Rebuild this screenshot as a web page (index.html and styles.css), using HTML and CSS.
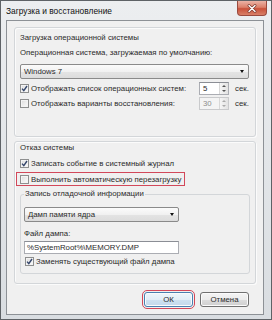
FILE: index.html
```html
<!DOCTYPE html>
<html lang="ru">
<head>
<meta charset="utf-8">
<link rel="stylesheet" href="styles.css">
</head>
<body>
<div class="window">
  <div class="titlebar">
    <span class="title">Загрузка и восстановление</span>
    <span class="close"><svg width="12" height="9" viewBox="0 0 12 9"><path d="M3 1.5 L9 7.5 M9 1.5 L3 7.5" stroke="#7a3a30" stroke-width="2.8" stroke-linecap="round"/><path d="M3 1.5 L9 7.5 M9 1.5 L3 7.5" stroke="#fff" stroke-width="1.4" stroke-linecap="round"/></svg></span>
  </div>
  <div class="client">
    <div class="group g1">
      <div class="glabel first">Загрузка операционной системы</div>
      <div class="text">Операционная система, загружаемая по умолчанию:</div>
      <div class="combo wide"><span class="ctext">Windows 7</span><i class="arrow"></i></div>
      <div class="row r1">
        <span class="cb"><svg width="7" height="7" viewBox="0 0 7 7"><path d="M1 3.6 L2.8 5.6 L6 1" fill="none" stroke="#34466b" stroke-width="1.4"/></svg></span>
        <span class="cbtext">Отображать список операционных систем:</span>
        <span class="spin"><span class="val">5</span><span class="arrows"><b class="up"></b><b class="down"></b></span></span>
        <span class="unit">сек.</span>
      </div>
      <div class="row r2">
        <span class="cb"></span>
        <span class="cbtext">Отображать варианты восстановления:</span>
        <span class="spin disabled"><span class="val">30</span><span class="arrows"><b class="up"></b><b class="down"></b></span></span>
        <span class="unit">сек.</span>
      </div>
    </div>
    <div class="group g2">
      <div class="glabel">Отказ системы</div>
      <div class="row r3">
        <span class="cb"><svg width="7" height="7" viewBox="0 0 7 7"><path d="M1 3.6 L2.8 5.6 L6 1" fill="none" stroke="#34466b" stroke-width="1.4"/></svg></span>
        <span class="cbtext">Записать событие в системный журнал</span>
      </div>
      <div class="redrow">
        <span class="cb"></span>
        <span class="cbtext">Выполнить автоматическую перезагрузку</span>
      </div>
      <fieldset class="debug">
        <legend>Запись отладочной информации</legend>
        <div class="combo narrow"><span class="ctext">Дамп памяти ядра</span><i class="arrow"></i></div>
        <div class="flabel">Файл дампа:</div>
        <div class="input">%SystemRoot%\MEMORY.DMP</div>
        <div class="row r4">
          <span class="cb"><svg width="7" height="7" viewBox="0 0 7 7"><path d="M1 3.6 L2.8 5.6 L6 1" fill="none" stroke="#34466b" stroke-width="1.4"/></svg></span>
          <span class="cbtext">Заменять существующий файл дампа</span>
        </div>
      </fieldset>
    </div>
    <div class="buttons">
      <span class="btn ok">ОК</span>
      <span class="btn">Отмена</span>
    </div>
  </div>
</div>
</body>
</html>
```
FILE: styles.css
```css
* { box-sizing: border-box; }
html, body { margin: 0; padding: 0; }
body {
  width: 272px;
  height: 320px;
  overflow: hidden;
  font-family: "Liberation Sans", Arial, sans-serif;
  font-size: 7.8px;
  color: #2a2a2a;
  background: #ffffff;
}
.window {
  width: 272px;
  height: 320px;
  border: 1px solid #5e6266;
  background: linear-gradient(#eceef0, #d9dde1);
  display: flex;
  flex-direction: column;
}
.titlebar {
  height: 19px;
  display: flex;
  align-items: center;
  padding-left: 5px;
}
.title {
  flex: 1;
  font-size: 8.4px;
  color: #111;
}
.close {
  align-self: flex-start;
  width: 30px;
  height: 15px;
  margin-right: 4px;
  border: 1px solid #9a4a3e;
  border-top: none;
  border-radius: 0 0 4px 4px;
  background: linear-gradient(#ebb3a6, #dc806a 45%, #c9513a 55%, #d98068);
  display: flex;
  align-items: center;
  justify-content: center;
}
.client {
  flex: 1;
  margin: 0 7px 4px 5px;
  border: 1px solid #8d9196;
  background: #f0f0f0;
  padding: 6px 7px 7px 7px;
  display: flex;
  flex-direction: column;
}
.group {
  border: 1px solid #d3d6d9;
  border-radius: 3px;
  box-shadow: inset 1px 1px 0 #fbfbfb, 1px 1px 0 #fbfbfb;
}
.g1 { height: 110px; }
.g2 { height: 143px; margin-top: 4px; }
.glabel { line-height: 12px; padding-left: 5px; }
.glabel.first { margin-top: 4px; }
.text { line-height: 12px; padding-left: 5px; margin-top: 3px; }
.combo {
  display: flex;
  align-items: center;
  height: 15px;
  border: 1px solid #8a8a8a;
  border-radius: 2px;
  background: linear-gradient(#fbfbfb, #f1f1f1 50%, #e4e4e4 51%, #dcdcdc);
  padding: 0 4px 0 3px;
}
.combo.wide { margin: 5px 6px 0 5px; }
.combo.narrow { width: 155px; margin-top: 7px; }
.ctext { flex: 1; }
.arrow {
  width: 0;
  height: 0;
  border-left: 2.5px solid transparent;
  border-right: 2.5px solid transparent;
  border-top: 3px solid #111;
}
.row {
  display: flex;
  align-items: center;
  height: 13px;
  padding: 0 6px 0 5px;
}
.r1 { margin-top: 3px; }
.r2 { margin-top: 2px; }
.r3 { margin-top: 3px; }
.r4 { margin-top: 1px; padding-left: 1px; }
.cb {
  width: 9px;
  height: 9px;
  border: 1px solid #8e8f8f;
  background: linear-gradient(135deg, #dcdcdc, #fdfdfd);
  box-shadow: inset 0 0 0 1px #f4f4f4;
  margin-right: 2px;
  display: flex;
  align-items: center;
  justify-content: center;
  flex: none;
}
.cbtext { white-space: nowrap; }
.spin {
  margin-left: auto;
  width: 30px;
  height: 13px;
  border: 1px solid #abadb3;
  border-top-color: #8b8e95;
  background: #fff;
  display: flex;
}
.spin .val { flex: 1; padding-left: 3px; line-height: 11px; }
.spin .arrows {
  width: 9px;
  display: flex;
  flex-direction: column;
  border-left: 1px solid #d8d8d8;
  background: linear-gradient(90deg, #f5f5f5, #e3e3e3);
}
.spin .arrows b {
  flex: 1;
  display: flex;
  align-items: center;
  justify-content: center;
}
.spin .arrows b::before {
  content: "";
  width: 0;
  height: 0;
  border-left: 2px solid transparent;
  border-right: 2px solid transparent;
}
.spin .arrows .up::before { border-bottom: 2px solid #555; }
.spin .arrows .down::before { border-top: 2px solid #555; }
.spin.disabled { background: #f4f4f4; border-color: #c9cacc; color: #8d8d8d; }
.spin.disabled .arrows b::before { border-bottom-color: #aaa; border-top-color: #aaa; }
.unit { width: 14px; margin-left: 6px; white-space: nowrap; }
.redrow {
  display: flex;
  align-items: center;
  width: 169px;
  height: 14px;
  margin: 2px 0 0 1px;
  border: 1px solid #d2485a;
  padding-left: 3px;
}
.debug {
  margin: 2px 5px 0 5px;
  padding: 0 4px 5px 3px;
  border: 1px solid #d3d6d9;
  border-radius: 3px;
  min-inline-size: 0;
}
.debug legend {
  padding: 0 1px;
  line-height: 12px;
}
.flabel { line-height: 12px; margin-top: 6px; }
.input {
  width: 155px;
  height: 13px;
  margin-top: 1px;
  border: 1px solid #abadb3;
  border-top-color: #8b8e95;
  background: #fff;
  padding-left: 2px;
  line-height: 11px;
}
.buttons {
  display: flex;
  justify-content: flex-end;
  gap: 7px;
  margin-top: 8px;
  padding-right: 7px;
}
.btn {
  width: 49px;
  height: 15px;
  border: 1px solid #707070;
  border-radius: 3px;
  background: linear-gradient(#f4f4f4, #ececec 50%, #dddddd 51%, #cfcfcf);
  box-shadow: inset 0 0 0 1px #fbfbfb;
  display: flex;
  align-items: center;
  justify-content: center;
}
.btn.ok {
  border-color: #4a80b0;
  background: linear-gradient(#eef6fb, #e2eef7 50%, #cfe2f1 51%, #c3d9ec);
  outline: 1px solid #d2485a;
  outline-offset: 1px;
}
```
